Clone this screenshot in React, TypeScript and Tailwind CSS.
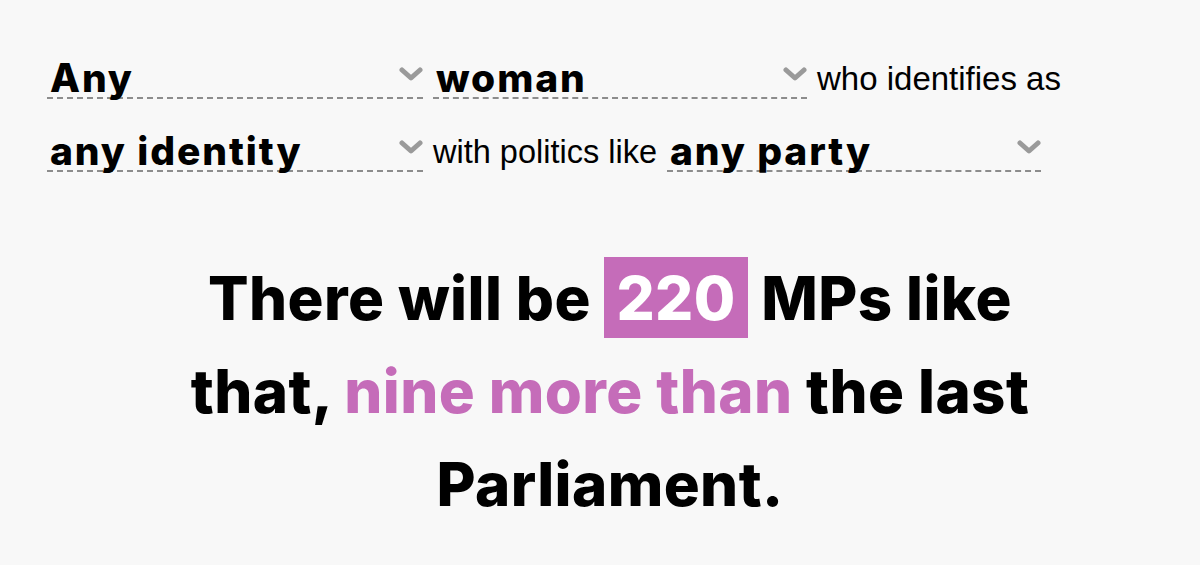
import React from 'react';

const Chevron = () => (
  <svg width="24" height="15" viewBox="0 0 24 15" className="shrink-0">
    <polyline points="3,3 12,11 21,3" fill="none" stroke="#9a9a9a" strokeWidth="5" strokeLinecap="round" strokeLinejoin="round" />
  </svg>
);

const Select = ({ label, width }: { label: string; width: string }) => (
  <div className={`${width} flex items-start justify-between border-b-2 border-dashed border-[#8c8c8c] h-[46px] pl-[3px]`}>
    <span className="pt-[5px] text-[39px] leading-none font-extrabold text-black tracking-[1.9px]">{label}</span>
    <span className="pt-[14px]"><Chevron /></span>
  </div>
);

export default function App() {
  return (
    <div className="min-h-screen w-full bg-[#f8f8f8] font-['Inter',sans-serif] text-black overflow-hidden">
      <div className="pl-[47px] pt-[53px]">
        <div className="flex items-end gap-[10px]">
          <Select label="Any" width="w-[376px]" />
          <Select label="woman" width="w-[374px]" />
          <span className="font-['Liberation_Sans',Arial,sans-serif] text-[33px] leading-none pb-[4px]">who identifies as</span>
        </div>
        <div className="flex items-end gap-[10px] mt-[27px]">
          <Select label="any identity" width="w-[376px]" />
          <span className="font-['Liberation_Sans',Arial,sans-serif] text-[32.5px] leading-none pb-[4px]">with politics like</span>
          <Select label="any party" width="w-[374px]" />
        </div>
      </div>
      <div className="mt-[80px] w-[870px] ml-[175px] text-center text-[60px] leading-[93px] font-extrabold tracking-[0.4px]">
        There will be{' '}
        <span className="bg-[#c56cb9] text-white px-[12px] pt-[5px] pb-[4px]">220</span>{' '}
        MPs like that, <span className="text-[#c56cb9]">nine more than</span> the last Parliament.
      </div>
    </div>
  );
}
